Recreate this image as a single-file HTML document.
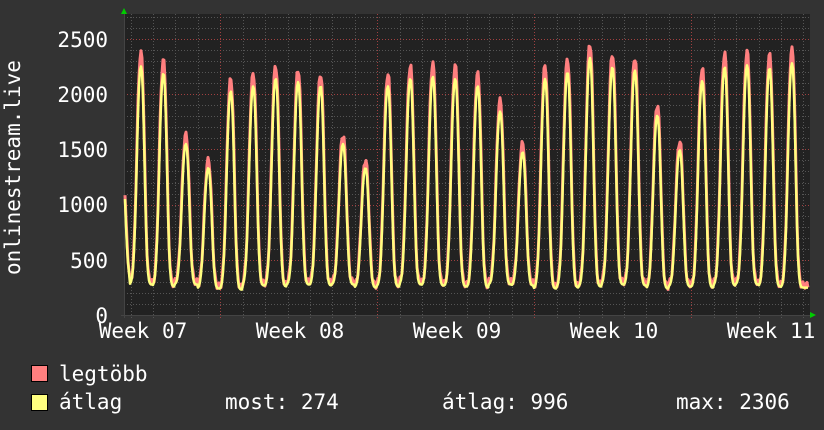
<!DOCTYPE html>
<html><head><meta charset="utf-8"><style>
html,body{margin:0;padding:0;background:#333;width:824px;height:430px;overflow:hidden}
svg text{font-family:"DejaVu Sans Mono","Liberation Mono",monospace;fill:#fff;font-size:21px}
</style></head><body>
<svg id="s" width="824" height="430" xmlns="http://www.w3.org/2000/svg">
<rect width="824" height="430" fill="#333"/>
<rect x="124" y="14" width="686" height="301" fill="#222"/>
<g id="grid"></g>
<g id="data"></g>
<polygon points="121,14 127,14 124,8" fill="#0c0"/>
<polygon points="810,312 810,318 816,315" fill="#0c0"/>
<g text-anchor="end">
<text x="108" y="47">2500</text>
<text x="108" y="102">2000</text>
<text x="108" y="157">1500</text>
<text x="108" y="212">1000</text>
<text x="108" y="268">500</text>
<text x="108" y="323">0</text>
</g>
<text transform="translate(20,275) rotate(-90)">onlinestream.live</text>
<g text-anchor="middle">
<text x="143" y="338">Week 07</text>
<text x="300" y="338">Week 08</text>
<text x="457" y="338">Week 09</text>
<text x="614" y="338">Week 10</text>
<text x="771" y="338">Week 11</text>
</g>
<rect x="31.5" y="365.5" width="16" height="16" fill="#ff7f7f" stroke="#000"/>
<rect x="31.5" y="394.5" width="16" height="16" fill="#ffff7f" stroke="#000"/>
<text x="59" y="381">legtöbb</text>
<text x="59" y="409">átlag</text>
<text x="225" y="409">most: 274</text>
<text x="442" y="409">átlag: 996</text>
<text x="676" y="409">max: 2306</text>
</svg>
<script>
var ns="http://www.w3.org/2000/svg",g=document.getElementById('grid'),d=document.getElementById('data');
function ln(x1,y1,x2,y2,c,dash){var l=document.createElementNS(ns,'line');l.setAttribute('x1',x1);l.setAttribute('y1',y1);l.setAttribute('x2',x2);l.setAttribute('y2',y2);l.setAttribute('stroke',c);l.setAttribute('stroke-width',1);if(dash)l.setAttribute('stroke-dasharray',dash);g.appendChild(l);}
function Y(v){return 315-v*0.1104;}
for(var v=100;v<=2700;v+=100){var y=Math.round(Y(v))+0.5;if(y<14)break;if(v%500==0)ln(124,y,810,y,'#a04040','1,2');else ln(124,y,810,y,'#555','1,2');}
for(var i=0;i<31;i++){var x=Math.round(130.5+22.43*i)+0.5;if(x>810)break;var maj=((i-4)%7==0);ln(x,14,x,318,maj?'#a04040':'#555','1,2');}
ln(124.5,14,124.5,318,'#444');ln(121,315.5,810,315.5,'#444');
var pk=[2370,2300,1630,1400,2130,2180,2250,2220,2180,1630,1400,2180,2250,2270,2250,2180,1940,1550,2250,2310,2450,2360,2330,1900,1570,2230,2360,2380,2350,2400];
var mn=[300,280,300,260,250,290,280,300,290,300,270,280,300,290,280,270,300,290,260,270,280,300,290,260,280,270,290,300,280,270];
function val(x,avg){var t=(x-141)/22.45;var k=Math.round(t);if(k<-1)k=-1;if(k>29)k=29;var ph=t-k;
var p=(k<0?2300:pk[k])*(avg?0.95:1),m=(k<0?300:mn[k])*(avg?0.92:1);
var sg=k<0?0.3:(ph<0?0.24:0.2);
var f=Math.exp(-Math.pow(Math.abs(ph)/sg,2.4));
var v=m+(p-m)*f;if(!avg)v+=(Math.sin(x*1.7)*30);return v;}
function path(avg,c,w){var s='';for(var x=125;x<=808;x+=1){var v=val(x,avg);s+=(x==125?'M':'L')+x+','+Y(v).toFixed(1);}
var p=document.createElementNS(ns,'path');p.setAttribute('d',s);p.setAttribute('fill','none');p.setAttribute('stroke',c);p.setAttribute('stroke-width',w);p.setAttribute('stroke-linejoin','round');d.appendChild(p);}
path(false,'#ff7f7f',3);path(true,'#ffff7f',2.5);
</script>
</body></html>
